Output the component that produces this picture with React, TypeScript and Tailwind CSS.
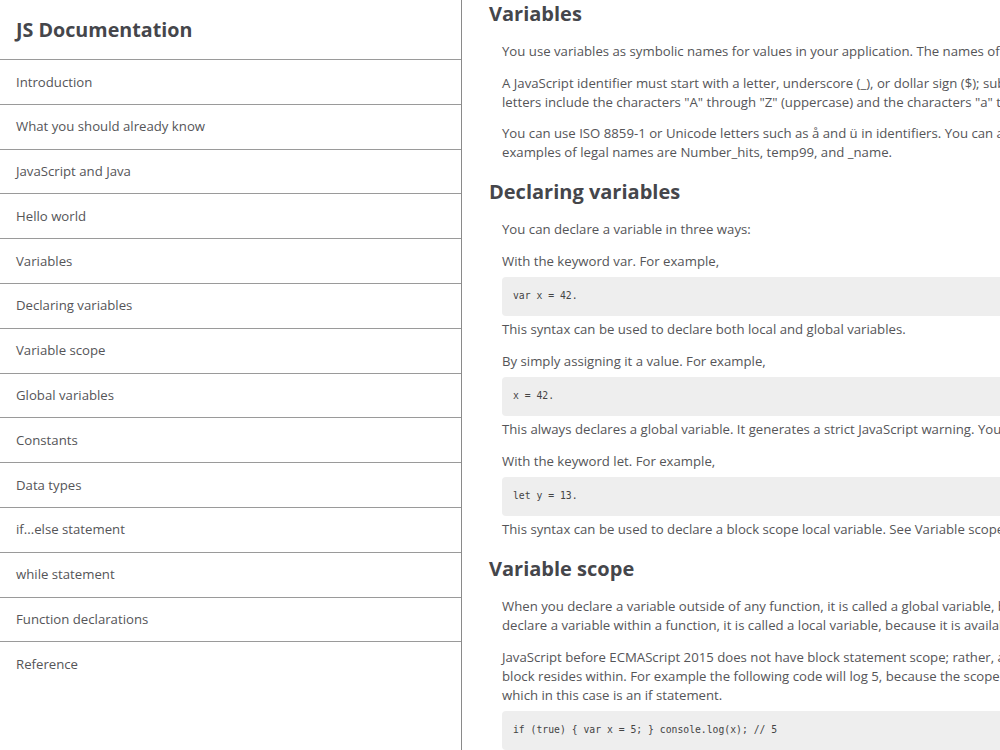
import React from "react";

const navItems = [
  "Introduction",
  "What you should already know",
  "JavaScript and Java",
  "Hello world",
  "Variables",
  "Declaring variables",
  "Variable scope",
  "Global variables",
  "Constants",
  "Data types",
  "if...else statement",
  "while statement",
  "Function declarations",
  "Reference",
];

const font = { fontFamily: '"Open Sans", "Noto Sans", sans-serif' };

function P({ lines }: { lines: string[] }) {
  return (
    <p className="ml-[13px] mb-[12.5px] text-[13.2px] leading-[19px] text-[#555558] whitespace-nowrap">
      {lines.map((l, i) => (
        <span key={i} className="block">
          {l}
        </span>
      ))}
    </p>
  );
}

function H({ children, first }: { children: React.ReactNode; first?: boolean }) {
  return (
    <h2
      className={`${first ? "mt-0" : "mt-[3.5px]"} mb-[15px] text-[20px] leading-[27px] font-bold text-[#45464b]`}
    >
      {children}
    </h2>
  );
}

function Code({ children }: { children: string }) {
  return (
    <div className="ml-[13px] mt-[-6px] mb-[4px] h-[39px] flex items-center pl-[11px] bg-[#eeeeee] rounded-[4px] w-[900px]">
      <code
        className="text-[9.75px] text-[#444] whitespace-pre"
        style={{ fontFamily: '"DejaVu Sans Mono", "Liberation Mono", monospace' }}
      >
        {children}
      </code>
    </div>
  );
}

export default function App() {
  return (
    <div className="flex h-[750px] w-[1000px] overflow-hidden bg-white" style={font}>
      <nav className="w-[462px] shrink-0 h-full border-r border-[#8a8a8a] flex flex-col">
        <header className="h-[60px] border-b border-[#9a9a9a] flex items-center pl-4 shrink-0">
          <h1 className="text-[19.7px] font-bold text-[#45464b] leading-none">JS Documentation</h1>
        </header>
        <ul className="flex flex-col">
          {navItems.map((item, i) => (
            <li
              key={item}
              className={`h-[44.8px] pt-[1px] ${i < navItems.length - 1 ? "border-b border-[#9a9a9a]" : ""} flex items-center pl-4 text-[13.2px] text-[#555558]`}
            >
              {item}
            </li>
          ))}
        </ul>
      </nav>
      <main className="flex-1 min-w-0 overflow-hidden pl-[27px]">
        <div className="w-[1000px] flex flex-col">
          <section className="flex flex-col">
            <H first>Variables</H>
            <P lines={["You use variables as symbolic names for values in your application. The names of variables, called identifiers, conform to certain rules."]} />
            <P
              lines={[
                "A JavaScript identifier must start with a letter, underscore (_), or dollar sign ($); subsequent characters can also be digits (0-9). Because JavaScript is case sensitive,",
                'letters include the characters "A" through "Z" (uppercase) and the characters "a" through "z" (lowercase).',
              ]}
            />
            <P
              lines={[
                "You can use ISO 8859-1 or Unicode letters such as å and ü in identifiers. You can also use the Unicode escape sequences as characters in identifiers. Some",
                "examples of legal names are Number_hits, temp99, and _name.",
              ]}
            />
          </section>
          <section className="flex flex-col">
            <H>Declaring variables</H>
            <P lines={["You can declare a variable in three ways:"]} />
            <P lines={["With the keyword var. For example,"]} />
            <Code>var x = 42.</Code>
            <P lines={["This syntax can be used to declare both local and global variables."]} />
            <P lines={["By simply assigning it a value. For example,"]} />
            <Code>x = 42.</Code>
            <P lines={["This always declares a global variable. It generates a strict JavaScript warning. You shouldn't use this variant."]} />
            <P lines={["With the keyword let. For example,"]} />
            <Code>let y = 13.</Code>
            <P lines={["This syntax can be used to declare a block scope local variable. See Variable scope below."]} />
          </section>
          <section className="flex flex-col">
            <H>Variable scope</H>
            <P
              lines={[
                "When you declare a variable outside of any function, it is called a global variable, because it is available to any other code in the current document. When you",
                "declare a variable within a function, it is called a local variable, because it is available only within that function.",
              ]}
            />
            <P
              lines={[
                "JavaScript before ECMAScript 2015 does not have block statement scope; rather, a variable declared within a block is local to the function (or global scope) that the",
                "block resides within. For example the following code will log 5, because the scope of x is the function (or global context) within which x is declared, not the block,",
                "which in this case is an if statement.",
              ]}
            />
            <Code>if (true) {"{"} var x = 5; {"}"} console.log(x); // 5</Code>
          </section>
        </div>
      </main>
    </div>
  );
}
